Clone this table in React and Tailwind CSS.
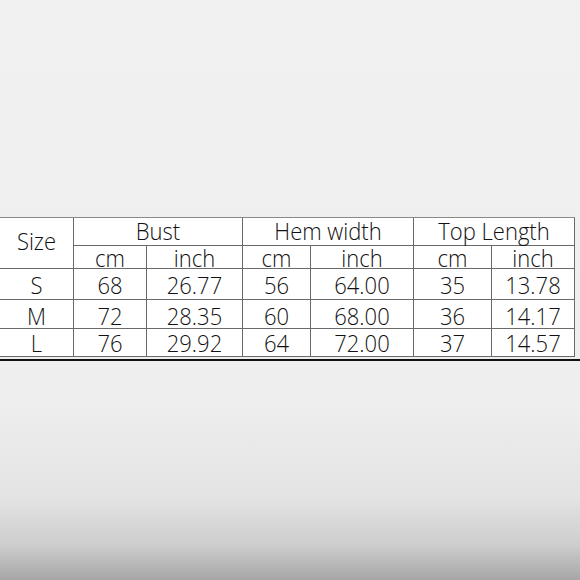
const rows = [
  ['S', '68', '26.77', '56', '64.00', '35', '13.78'],
  ['M', '72', '28.35', '60', '68.00', '36', '14.17'],
  ['L', '76', '29.92', '64', '72.00', '37', '14.57'],
];

const rowStyle = ['h-[31px] pb-[5px]', 'h-[29px] pb-[3px]', 'h-[28px] pb-[4px]'];

function Cell({ className = '', children }) {
  return (
    <div className={`border-[#6a6a6a] flex items-end justify-center ${className}`}>
      <span className="inline-block scale-y-[1.1] origin-bottom">{children}</span>
    </div>
  );
}

export default function App() {
  return (
    <div className="w-[580px] h-[580px] flex flex-col pt-[217px] bg-[linear-gradient(to_bottom,#f1f1f1_0%,#eeeeee_70%,#e3e3e3_86%,#cdcdcd_94%,#a6a6a6_100%)] text-[#111] font-['Open_Sans',sans-serif] font-light text-[22px] leading-[18px]">
      <div className="w-[575px] bg-white border-t border-[#8a8a8a] grid grid-cols-[73px_73px_96px_68px_103px_78px_84px]">
        <Cell className="row-span-2 h-[51px] border-b pb-[18px]">Size</Cell>
        <Cell className="col-span-2 h-[28px] border-l border-b pb-[5px]">Bust</Cell>
        <Cell className="col-span-2 h-[28px] border-l border-b pb-[5px]">Hem width</Cell>
        <Cell className="col-span-2 h-[28px] border-l border-r border-b pb-[5px]">Top Length</Cell>
        {['cm', 'inch', 'cm', 'inch', 'cm', 'inch'].map((t, i) => (
          <Cell key={i} className={`h-[23px] pb-[1px] border-l border-b ${i === 5 ? 'border-r' : ''}`}>{t}</Cell>
        ))}
        {rows.map((r, ri) =>
          r.map((v, ci) => (
            <Cell
              key={`${ri}-${ci}`}
              className={`${rowStyle[ri]} border-b ${ci > 0 ? 'border-l' : ''} ${ci === 6 ? 'border-r' : ''}`}
            >
              {v}
            </Cell>
          ))
        )}
      </div>
      <div className="w-[580px] h-[2px] mt-[2px] bg-[#111]" />
    </div>
  );
}
